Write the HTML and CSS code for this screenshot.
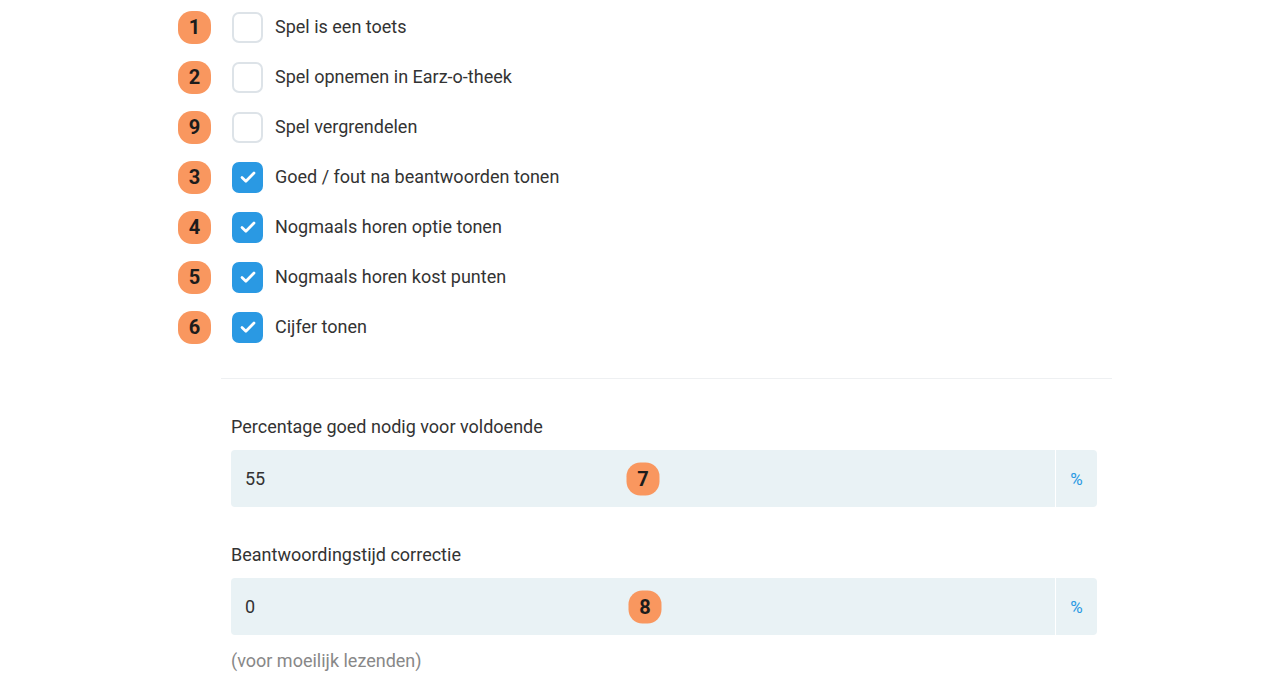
FILE: index.html
```html
<!DOCTYPE html>
<html lang="nl">
<head>
<meta charset="utf-8">
<title>Spelinstellingen</title>
<link rel="stylesheet" href="styles.css">
</head>
<body>
<div class="page">
  <ul class="options">
    <li class="option"><span class="badge">1</span><span class="box"></span><span class="label">Spel is een toets</span></li>
    <li class="option"><span class="badge">2</span><span class="box"></span><span class="label">Spel opnemen in Earz-o-theek</span></li>
    <li class="option"><span class="badge">9</span><span class="box"></span><span class="label">Spel vergrendelen</span></li>
    <li class="option"><span class="badge">3</span><span class="box checked"><svg class="check" viewBox="0 0 16 16"><path d="M3.2 8.4l3.1 3 6.5-6.6" fill="none" stroke="#fff" stroke-width="2.2" stroke-linecap="round" stroke-linejoin="round"/></svg></span><span class="label">Goed / fout na beantwoorden tonen</span></li>
    <li class="option"><span class="badge">4</span><span class="box checked"><svg class="check" viewBox="0 0 16 16"><path d="M3.2 8.4l3.1 3 6.5-6.6" fill="none" stroke="#fff" stroke-width="2.2" stroke-linecap="round" stroke-linejoin="round"/></svg></span><span class="label">Nogmaals horen optie tonen</span></li>
    <li class="option"><span class="badge">5</span><span class="box checked"><svg class="check" viewBox="0 0 16 16"><path d="M3.2 8.4l3.1 3 6.5-6.6" fill="none" stroke="#fff" stroke-width="2.2" stroke-linecap="round" stroke-linejoin="round"/></svg></span><span class="label">Nogmaals horen kost punten</span></li>
    <li class="option"><span class="badge">6</span><span class="box checked"><svg class="check" viewBox="0 0 16 16"><path d="M3.2 8.4l3.1 3 6.5-6.6" fill="none" stroke="#fff" stroke-width="2.2" stroke-linecap="round" stroke-linejoin="round"/></svg></span><span class="label">Cijfer tonen</span></li>
  </ul>
  <hr class="divider">
  <div class="fields">
    <div class="field">
      <div class="field-label">Percentage goed nodig voor voldoende</div>
      <div class="input-group">
        <div class="input"><span class="value">55</span><span class="badge overlay">7</span></div>
        <div class="addon">%</div>
      </div>
    </div>
    <div class="field">
      <div class="field-label">Beantwoordingstijd correctie</div>
      <div class="input-group">
        <div class="input"><span class="value">0</span><span class="badge overlay shift">8</span></div>
        <div class="addon">%</div>
      </div>
      <div class="hint">(voor moeilijk lezenden)</div>
    </div>
  </div>
</div>
</body>
</html>
```

FILE: styles.css
```css
html, body {
  margin: 0;
  padding: 0;
  background: #ffffff;
}

body {
  font-family: Roboto, "Noto Sans", Arial, sans-serif;
  color: #333333;
  font-size: 18px;
}

.page {
  width: 1280px;
  height: 675px;
  overflow: hidden;
}

.options {
  list-style: none;
  margin: 0;
  padding: 2px 0 0 178px;
}

.option {
  display: flex;
  align-items: center;
  height: 50px;
}

.badge {
  display: inline-flex;
  align-items: center;
  justify-content: center;
  width: 33px;
  height: 33px;
  border-radius: 14px;
  background: #f9975f;
  color: #1c1c1c;
  font-weight: 700;
  font-size: 20px;
  flex-shrink: 0;
}

.box {
  box-sizing: border-box;
  width: 31px;
  height: 31px;
  margin-left: 21px;
  border: 2px solid #dde3e8;
  border-radius: 7px;
  background: #fff;
  display: flex;
  align-items: center;
  justify-content: center;
  flex-shrink: 0;
}

.box.checked {
  background: #2a99e3;
  border-color: #2a99e3;
}

.check {
  width: 20px;
  height: 20px;
  display: block;
}

.label {
  margin-left: 12px;
  line-height: 24px;
  color: #333;
}

.divider {
  border: 0;
  border-top: 1px solid #eef0f2;
  margin: 26px 0 0 221px;
  width: 891px;
  height: 0;
}

.fields {
  padding-left: 231px;
  width: 866px;
}

.field {
  padding-top: 36px;
}

.field-label {
  line-height: 24px;
  margin-bottom: 11px;
  color: #333;
}

.input-group {
  display: flex;
  height: 57px;
  border-radius: 4px;
  overflow: hidden;
  background: #e9f2f5;
}

.input {
  position: relative;
  flex: 1;
  display: flex;
  align-items: center;
  padding-left: 14px;
  color: #333;
}

.overlay {
  position: absolute;
  left: 50%;
  top: 50%;
  transform: translate(-50%, -50%);
}

.overlay.shift {
  margin-left: 2px;
}

.addon {
  width: 41px;
  border-left: 1px solid #ffffff;
  display: flex;
  align-items: center;
  justify-content: center;
  color: #2a99e3;
  font-size: 17px;
}

.hint {
  margin-top: 14px;
  line-height: 24px;
  color: #888888;
}
```
